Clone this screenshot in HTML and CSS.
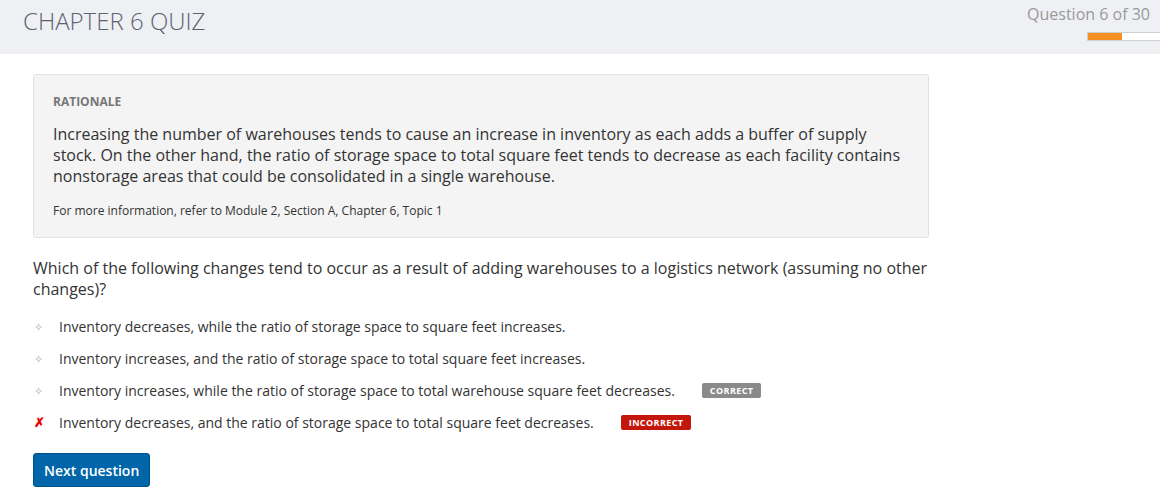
FILE: index.html
```html
<!DOCTYPE html>
<html>
<head>
<meta charset="utf-8">
<link rel="stylesheet" href="styles.css">
</head>
<body>
<header class="top">
  <h1 class="title">CHAPTER 6 QUIZ</h1>
  <div class="progress-area">
    <div class="qcount">Question 6 of 30</div>
    <div class="bar"><div class="bar-fill" style="width:47%"></div></div>
  </div>
</header>
<main class="main">
  <section class="rationale">
    <div class="r-label">RATIONALE</div>
    <p class="r-text">Increasing the number of warehouses tends to cause an increase in inventory as each adds a buffer of supply stock. On the other hand, the ratio of storage space to total square feet tends to decrease as each facility contains nonstorage areas that could be consolidated in a single warehouse.</p>
    <p class="r-ref">For more information, refer to Module 2, Section A, Chapter 6, Topic 1</p>
  </section>
  <p class="question">Which of the following changes tend to occur as a result of adding warehouses to a logistics network (assuming no other changes)?</p>
  <ul class="options">
    <li class="opt"><span class="mark diamond">&#x2727;</span><span class="opt-text">Inventory decreases, while the ratio of storage space to square feet increases.</span></li>
    <li class="opt"><span class="mark diamond">&#x2727;</span><span class="opt-text">Inventory increases, and the ratio of storage space to total square feet increases.</span></li>
    <li class="opt"><span class="mark diamond">&#x2727;</span><span class="opt-text">Inventory increases, while the ratio of storage space to total warehouse square feet decreases.</span><span class="badge badge-correct">CORRECT</span></li>
    <li class="opt"><span class="mark cross">&#x2717;</span><span class="opt-text">Inventory decreases, and the ratio of storage space to total square feet decreases.</span><span class="badge badge-incorrect">INCORRECT</span></li>
  </ul>
  <button class="next">Next question</button>
</main>
</body>
</html>
```
FILE: styles.css
```css
* { box-sizing: border-box; }
body {
  margin: 0;
  font-family: "Open Sans", "Liberation Sans", sans-serif;
  color: #333;
  background: #fff;
}
.top {
  height: 54px;
  background: #eff0f4;
  display: flex;
  justify-content: space-between;
  align-items: flex-start;
}
.title {
  margin: 0;
  padding: 6px 0 0 23px;
  font-size: 24px;
  font-weight: 300;
  line-height: 30px;
  color: #5b6270;
}
.progress-area {
  display: flex;
  flex-direction: column;
  align-items: flex-end;
  padding-top: 3px;
}
.qcount {
  font-size: 16px;
  color: #999;
  line-height: 22px;
  padding-right: 10px;
}
.bar {
  margin-top: 7px;
  width: 73px;
  height: 9px;
  background: #fff;
  border: 1px solid #d0d0d0;
  border-right: none;
}
.bar-fill {
  height: 100%;
  background: #f59120;
}
.main {
  padding: 20px 0 0 33px;
  width: 929px;
}
.rationale {
  background: #f4f4f4;
  border: 1px solid #e2e2e2;
  border-radius: 3px;
  padding: 19px 19px 18px 19px;
}
.r-label {
  font-size: 12px;
  font-weight: 700;
  color: #777;
  line-height: 16px;
}
.r-text {
  margin: 14px 0 0;
  font-size: 16px;
  line-height: 21px;
  color: #333;
}
.r-ref {
  margin: 16px 0 0;
  font-size: 12px;
  line-height: 16px;
  color: #333;
}
.question {
  margin: 20px 0 0;
  font-size: 16px;
  line-height: 21px;
  color: #333;
}
.options {
  list-style: none;
  margin: 10px 0 0;
  padding: 0;
}
.opt {
  display: flex;
  align-items: center;
  height: 32px;
  font-size: 14px;
  color: #333;
}
.mark {
  width: 26px;
  display: inline-flex;
  justify-content: flex-start;
}
.diamond {
  color: #aaa;
  font-size: 11px;
  padding-left: 1px;
}
.cross {
  color: #e00;
  font-size: 13px;
  font-weight: 700;
  padding-left: 1px;
}
.badge {
  margin-left: 27px;
  font-size: 9px;
  font-weight: 700;
  letter-spacing: 0.4px;
  color: #fff;
  padding: 0 8px;
  height: 15px;
  line-height: 15px;
  border-radius: 2px;
}
.badge-correct { background: #8a8a8a; }
.badge-incorrect { background: #c4170c; }
.next {
  margin-top: 15px;
  background: #0065a9;
  color: #fff;
  border: 1px solid #00528a;
  border-radius: 3px;
  font-family: "Open Sans", "Liberation Sans", sans-serif;
  font-size: 14px;
  font-weight: 600;
  height: 34px;
  padding: 0 10px;
  cursor: pointer;
}
```
